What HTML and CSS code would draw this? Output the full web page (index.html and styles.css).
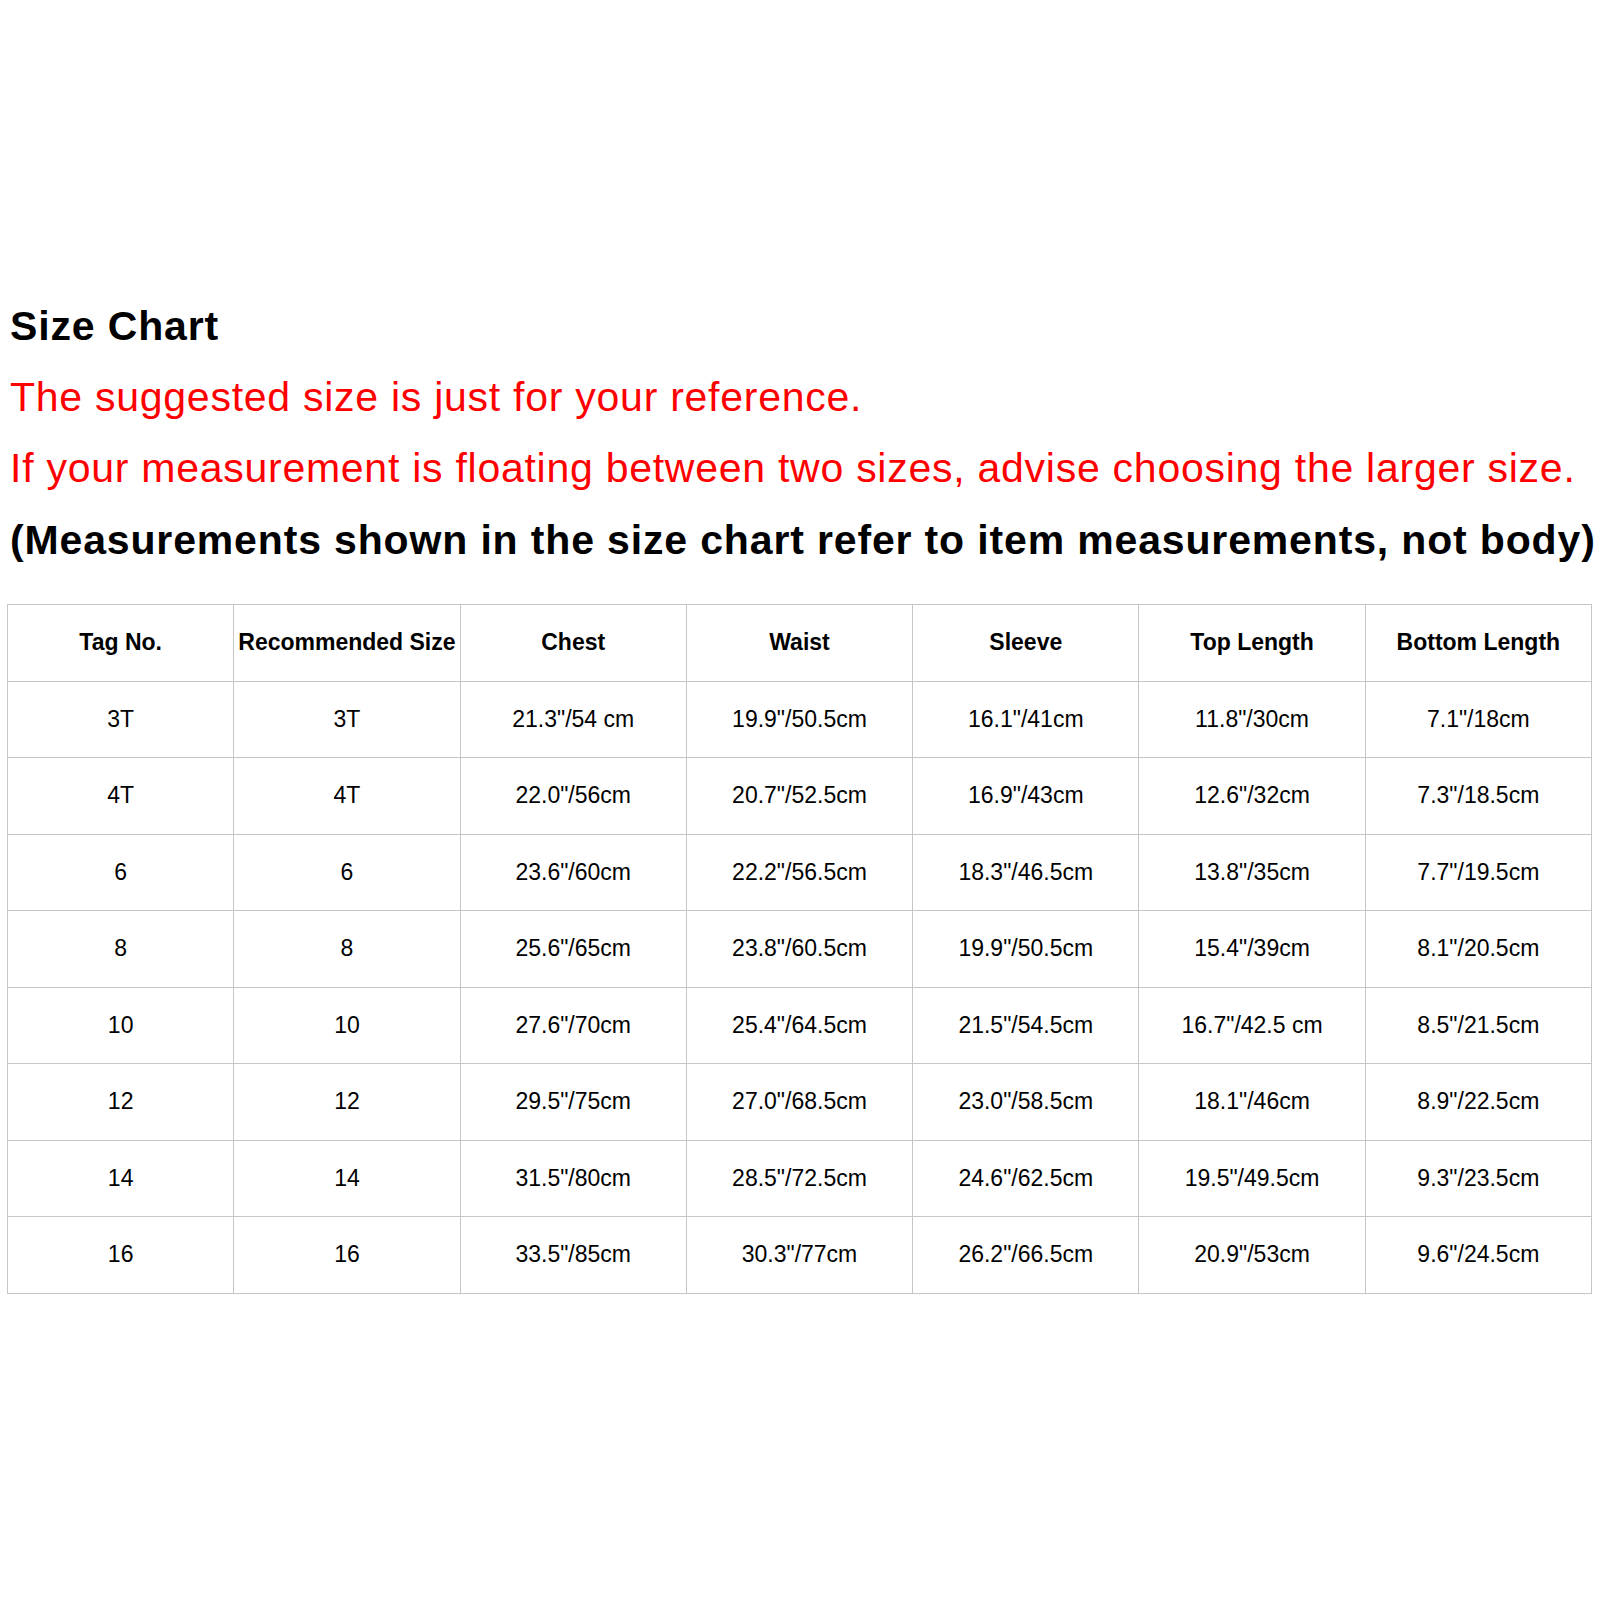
FILE: index.html
```html
<!DOCTYPE html>
<html lang="en">
<head>
<meta charset="utf-8">
<title>Size Chart</title>
<link rel="stylesheet" href="styles.css">
</head>
<body>
<div class="page">
  <div class="intro">
    <p class="line bold">Size Chart</p>
    <p class="line red">The suggested size is just for your reference.</p>
    <p class="line red">If your measurement is floating between two sizes, advise choosing the larger size.</p>
    <p class="line bold last">(Measurements shown in the size chart refer to item measurements, not body)</p>
  </div>
  <table class="chart">
    <thead>
      <tr><th>Tag No.</th><th>Recommended Size</th><th>Chest</th><th>Waist</th><th>Sleeve</th><th>Top Length</th><th>Bottom Length</th></tr>
    </thead>
    <tbody>
      <tr><td>3T</td><td>3T</td><td>21.3"/54 cm</td><td>19.9"/50.5cm</td><td>16.1"/41cm</td><td>11.8"/30cm</td><td>7.1"/18cm</td></tr>
      <tr><td>4T</td><td>4T</td><td>22.0"/56cm</td><td>20.7"/52.5cm</td><td>16.9"/43cm</td><td>12.6"/32cm</td><td>7.3"/18.5cm</td></tr>
      <tr><td>6</td><td>6</td><td>23.6"/60cm</td><td>22.2"/56.5cm</td><td>18.3"/46.5cm</td><td>13.8"/35cm</td><td>7.7"/19.5cm</td></tr>
      <tr><td>8</td><td>8</td><td>25.6"/65cm</td><td>23.8"/60.5cm</td><td>19.9"/50.5cm</td><td>15.4"/39cm</td><td>8.1"/20.5cm</td></tr>
      <tr><td>10</td><td>10</td><td>27.6"/70cm</td><td>25.4"/64.5cm</td><td>21.5"/54.5cm</td><td>16.7"/42.5 cm</td><td>8.5"/21.5cm</td></tr>
      <tr><td>12</td><td>12</td><td>29.5"/75cm</td><td>27.0"/68.5cm</td><td>23.0"/58.5cm</td><td>18.1"/46cm</td><td>8.9"/22.5cm</td></tr>
      <tr><td>14</td><td>14</td><td>31.5"/80cm</td><td>28.5"/72.5cm</td><td>24.6"/62.5cm</td><td>19.5"/49.5cm</td><td>9.3"/23.5cm</td></tr>
      <tr><td>16</td><td>16</td><td>33.5"/85cm</td><td>30.3"/77cm</td><td>26.2"/66.5cm</td><td>20.9"/53cm</td><td>9.6"/24.5cm</td></tr>
    </tbody>
  </table>
</div>
</body>
</html>
```

FILE: styles.css
```css
html, body {
  margin: 0;
  padding: 0;
  background: #ffffff;
}

body {
  font-family: "Liberation Sans", Arial, sans-serif;
  color: #000000;
  width: 1600px;
  height: 1600px;
  overflow: hidden;
}

.page {
  padding-top: 291px;
}

.intro {
  padding-left: 10px;
}

.line {
  margin: 0;
  font-size: 41px;
  line-height: 71px;
  letter-spacing: 0.74px;
  white-space: nowrap;
}

.bold {
  font-weight: bold;
  letter-spacing: 0.85px;
}

.last {
  line-height: 72px;
}

.red {
  color: #ff0000;
}

.chart {
  margin: 28px 0 0 7px;
  width: 1585px;
  border-collapse: collapse;
  table-layout: fixed;
}

.chart th,
.chart td {
  border: 1px solid #c6c6c6;
  height: 75.5px;
  padding: 0;
  text-align: center;
  vertical-align: middle;
  white-space: nowrap;
}

.chart th {
  font-size: 23px;
  font-weight: bold;
}

.chart td {
  font-size: 23px;
}
```
